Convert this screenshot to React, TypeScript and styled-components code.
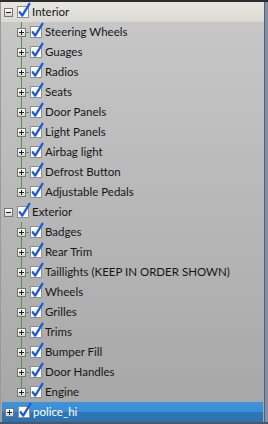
import React from "react";
import styled, { createGlobalStyle } from "styled-components";

const Global = createGlobalStyle`
  html, body { margin: 0; padding: 0; background: #a8a8a8; }
  body { font-family: Lato, "Liberation Sans", sans-serif; }
`;

const Frame = styled.div`
  width: 268px;
  height: 424px;
  box-sizing: border-box;
  border-top: 2px solid #2d2d2d;
  border-bottom: 2px solid #4b5669;
  background: #8190a8;
  display: flex;
`;

const Panel = styled.div`
  width: 265px;
  height: 100%;
  box-sizing: border-box;
  border-left: 1px solid #9a9a9a;
  border-right: 1px solid #55606f;
  background: linear-gradient(#c8c8c8, #a6a6a6);
  display: flex;
  flex-direction: column;
`;

const Row = styled.div<{ $level: number; $hover?: boolean; $selected?: boolean }>`
  height: 20px;
  flex: none;
  display: flex;
  align-items: center;
  box-sizing: border-box;
  padding-left: ${(p) => (p.$level === 0 ? 2 : 15)}px;
  margin-right: ${(p) => (p.$selected ? 1 : 0)}px;
  margin-left: ${(p) => (p.$selected ? 1 : 0)}px;
  position: relative;
  z-index: 1;
  background: ${(p) =>
    p.$selected
      ? "linear-gradient(#3d92db 0%, #3a8ed6 48%, #2f76b6 52%, #2d72b0 100%)"
      : p.$hover
      ? "linear-gradient(#e8e6e0, #dbd9d3)"
      : "transparent"};
  color: ${(p) => (p.$selected ? "#ffffff" : "#161616")};
`;

const Group = styled.div`
  position: relative;
  display: flex;
  flex-direction: column;
  &::before {
    content: "";
    position: absolute;
    left: 20px;
    top: 0;
    bottom: 10px;
    width: 1px;
    background: #3ea33c;
  }
`;

const Expander = styled.span`
  width: 9px;
  height: 9px;
  box-sizing: border-box;
  border: 1px solid #767676;
  background: linear-gradient(#ffffff, #d4d4d4);
  position: relative;
  flex: none;
  margin-top: 1px;
  margin-left: 1px;
  z-index: 2;
  &::before {
    content: "";
    position: absolute;
    left: 1px;
    top: 3px;
    width: 5px;
    height: 1px;
    background: #1e1e1e;
  }
`;

const PlusExpander = styled(Expander)`
  &::after {
    content: "";
    position: absolute;
    left: 3px;
    top: 1px;
    width: 1px;
    height: 5px;
    background: #1e1e1e;
  }
`;

const Dash = styled.span`
  width: 3px;
  height: 1px;
  background: #3ea33c;
  flex: none;
  margin-top: 1px;
`;

const Gap = styled.span<{ $w: number }>`
  width: ${(p) => p.$w}px;
  flex: none;
`;

const CheckSvg = styled.svg`
  flex: none;
  display: block;
  margin-top: -3px;
`;

const Label = styled.span`
  font-family: Lato, "Liberation Sans", sans-serif;
  font-size: 11.5px;
  line-height: 20px;
  white-space: nowrap;
  margin-left: 1px;
`;

function Check() {
  return (
    <CheckSvg width="14" height="17" viewBox="0 0 14 17">
      <rect x="0.5" y="4.5" width="11" height="11" fill="#e9e9e9" stroke="#8e8e8e" />
      <rect x="1.5" y="5.5" width="9" height="9" fill="#fbfbfb" stroke="#ffffff" />
      <path
        d="M2.7 10.2 L5.2 13.6 L12.4 1.8"
        fill="none"
        stroke="#1d5bd8"
        strokeWidth="2.3"
        strokeLinecap="round"
        strokeLinejoin="round"
      />
    </CheckSvg>
  );
}

type Node = { label: string; children?: string[]; open?: boolean };

const data: Node[] = [
  {
    label: "Interior",
    open: true,
    children: [
      "Steering Wheels",
      "Guages",
      "Radios",
      "Seats",
      "Door Panels",
      "Light Panels",
      "Airbag light",
      "Defrost Button",
      "Adjustable Pedals",
    ],
  },
  {
    label: "Exterior",
    open: true,
    children: [
      "Badges",
      "Rear Trim",
      "Taillights (KEEP IN ORDER SHOWN)",
      "Wheels",
      "Grilles",
      "Trims",
      "Bumper Fill",
      "Door Handles",
      "Engine",
    ],
  },
  { label: "police_hi", open: false },
];

export default function App() {
  return (
    <>
      <Global />
      <Frame>
        <Panel>
          {data.map((n, i) => (
            <React.Fragment key={n.label}>
              <Row $level={0} $hover={i === 0} $selected={n.label === "police_hi"}>
                {n.open ? <Expander /> : <PlusExpander />}
                <Gap $w={4} />
                <Check />
                <Label>{n.label}</Label>
              </Row>
              {n.open && n.children && (
                <Group>
                  {n.children.map((c) => (
                    <Row key={c} $level={1}>
                      <PlusExpander />
                      <Dash />
                      <Gap $w={1} />
                      <Check />
                      <Label>{c}</Label>
                    </Row>
                  ))}
                </Group>
              )}
            </React.Fragment>
          ))}
        </Panel>
      </Frame>
    </>
  );
}
